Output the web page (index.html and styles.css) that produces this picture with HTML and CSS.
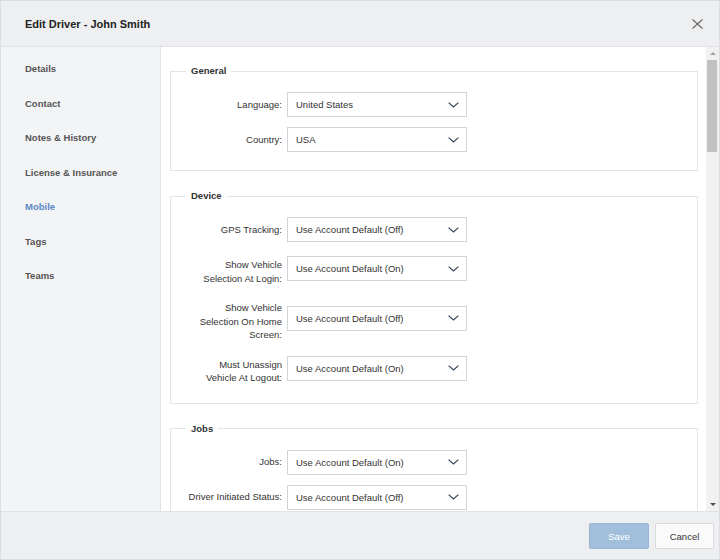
FILE: index.html
```html
<!DOCTYPE html>
<html lang="en">
<head>
    <meta charset="UTF-8">
    <meta name="viewport" content="width=device-width, initial-scale=1.0">
    <title>Edit Driver - John Smith</title>
    <link rel="stylesheet" href="styles.css">
</head>
<body>

    <div class="dialog">
        <header class="dialog-header">
            <h1>Edit Driver - John Smith</h1>
            <button class="close" type="button" aria-label="Close">
                <svg width="11" height="10" viewBox="0 0 11 10"><path d="M0.5 0.5l10 9M10.5 0.5l-10 9" stroke="#666" stroke-width="1.1" fill="none"/></svg>
            </button>
        </header>

        <div class="dialog-body">
            <nav class="side-nav">
                <a href="#">Details</a>
                <a href="#">Contact</a>
                <a href="#">Notes &amp; History</a>
                <a href="#">License &amp; Insurance</a>
                <a href="#" class="active">Mobile</a>
                <a href="#">Tags</a>
                <a href="#">Teams</a>
            </nav>

            <div class="content">
                <fieldset>
                    <legend>General</legend>
                    <div class="field">
                        <label>Language:</label>
                        <div class="select"><select><option>United States</option></select><svg width="11" height="6" viewBox="0 0 11 6"><path d="M0.6 0.6l4.9 4.4 4.9-4.4" stroke="#34445a" stroke-width="1.2" fill="none"/></svg></div>
                    </div>
                    <div class="field">
                        <label>Country:</label>
                        <div class="select"><select><option>USA</option></select><svg width="11" height="6" viewBox="0 0 11 6"><path d="M0.6 0.6l4.9 4.4 4.9-4.4" stroke="#34445a" stroke-width="1.2" fill="none"/></svg></div>
                    </div>
                </fieldset>

                <fieldset>
                    <legend>Device</legend>
                    <div class="field">
                        <label>GPS Tracking:</label>
                        <div class="select"><select><option>Use Account Default (Off)</option></select><svg width="11" height="6" viewBox="0 0 11 6"><path d="M0.6 0.6l4.9 4.4 4.9-4.4" stroke="#34445a" stroke-width="1.2" fill="none"/></svg></div>
                    </div>
                    <div class="field field--wrap">
                        <label>Show Vehicle Selection At Login:</label>
                        <div class="select"><select><option>Use Account Default (On)</option></select><svg width="11" height="6" viewBox="0 0 11 6"><path d="M0.6 0.6l4.9 4.4 4.9-4.4" stroke="#34445a" stroke-width="1.2" fill="none"/></svg></div>
                    </div>
                    <div class="field field--wrap">
                        <label>Show Vehicle Selection On Home Screen:</label>
                        <div class="select"><select><option>Use Account Default (Off)</option></select><svg width="11" height="6" viewBox="0 0 11 6"><path d="M0.6 0.6l4.9 4.4 4.9-4.4" stroke="#34445a" stroke-width="1.2" fill="none"/></svg></div>
                    </div>
                    <div class="field field--wrap">
                        <label>Must Unassign Vehicle At Logout:</label>
                        <div class="select"><select><option>Use Account Default (On)</option></select><svg width="11" height="6" viewBox="0 0 11 6"><path d="M0.6 0.6l4.9 4.4 4.9-4.4" stroke="#34445a" stroke-width="1.2" fill="none"/></svg></div>
                    </div>
                </fieldset>

                <fieldset>
                    <legend>Jobs</legend>
                    <div class="field">
                        <label>Jobs:</label>
                        <div class="select"><select><option>Use Account Default (On)</option></select><svg width="11" height="6" viewBox="0 0 11 6"><path d="M0.6 0.6l4.9 4.4 4.9-4.4" stroke="#34445a" stroke-width="1.2" fill="none"/></svg></div>
                    </div>
                    <div class="field">
                        <label>Driver Initiated Status:</label>
                        <div class="select"><select><option>Use Account Default (Off)</option></select><svg width="11" height="6" viewBox="0 0 11 6"><path d="M0.6 0.6l4.9 4.4 4.9-4.4" stroke="#34445a" stroke-width="1.2" fill="none"/></svg></div>
                    </div>
                </fieldset>
            </div>

            <div class="scrollbar" aria-hidden="true">
                <span class="scroll-btn scroll-up"></span>
                <div class="scroll-track"><span class="scroll-thumb"></span></div>
                <span class="scroll-btn scroll-down"></span>
            </div>
        </div>

        <footer class="dialog-footer">
            <button type="button" class="btn btn-save" disabled>Save</button>
            <button type="button" class="btn btn-cancel">Cancel</button>
        </footer>
    </div>

</body>
</html>
```

FILE: styles.css
```css
* {
    box-sizing: border-box;
}

html, body {
    margin: 0;
    padding: 0;
}

body {
    font-family: "Liberation Sans", Arial, sans-serif;
    font-size: 9.5px;
    color: #333;
    background-color: #fff;
}

.dialog {
    height: 560px;
    display: flex;
    flex-direction: column;
    border: 1px solid #dcdde0;
}

/* Cabeçalho */
.dialog-header {
    flex: 0 0 46px;
    display: flex;
    align-items: center;
    justify-content: space-between;
    padding: 0 16px 0 24px;
    background-color: #eeeff1;
    border-bottom: 1px solid #e1e2e5;
}

.dialog-header h1 {
    margin: 0;
    font-size: 11px;
    font-weight: bold;
    color: #222;
}

.close {
    display: flex;
    padding: 0;
    border: none;
    background: none;
    cursor: pointer;
}

.dialog-body {
    flex: 1;
    display: flex;
    min-height: 0;
}

/* Menu lateral */
.side-nav {
    flex: 0 0 160px;
    padding-top: 5px;
    background-color: #f3f4f6;
    border-right: 1px solid #e1e2e5;
}

.side-nav a {
    display: block;
    padding: 0 24px;
    line-height: 34.5px;
    font-weight: bold;
    color: #555;
    text-decoration: none;
}

.side-nav a.active {
    color: #5b88c4;
}

/* Conteúdo */
.content {
    flex: 1;
    min-width: 0;
    overflow: hidden;
    padding: 17px 8px 0 9px;
}

fieldset {
    min-width: 0;
    margin: 0 0 18px;
    padding: 14px 0 18px;
    border: 1px solid #e3e4e6;
}

legend {
    margin-left: 15px;
    padding: 0 5px;
    line-height: 14px;
    font-weight: bold;
    color: #333;
}

.field {
    display: flex;
    align-items: center;
    margin-bottom: 10px;
}

.field:last-child {
    margin-bottom: 0;
}

.field label {
    flex: 0 0 96px;
    margin: 0 5px 0 15px;
    text-align: right;
    line-height: 13.5px;
    color: #333;
}

.field--wrap label {
    padding-top: 6px;
}

.select {
    position: relative;
    width: 180px;
}

.select select {
    width: 100%;
    height: 25px;
    padding: 0 24px 0 8px;
    -webkit-appearance: none;
    appearance: none;
    border: 1px solid #d3d4d7;
    border-radius: 0;
    background-color: #fff;
    font: inherit;
    color: #333;
}

.select svg {
    position: absolute;
    right: 8px;
    top: 50%;
    margin-top: -3px;
    pointer-events: none;
}

/* Barra de rolagem */
.scrollbar {
    flex: 0 0 13px;
    display: flex;
    flex-direction: column;
    background-color: #f1f1f1;
}

.scroll-btn {
    flex: 0 0 13px;
    display: flex;
    align-items: center;
    justify-content: center;
}

.scroll-btn::before {
    content: "";
    border-left: 3px solid transparent;
    border-right: 3px solid transparent;
}

.scroll-up::before {
    border-bottom: 3px solid #a3a3a3;
}

.scroll-down::before {
    border-top: 3px solid #505050;
}

.scroll-track {
    flex: 1;
    padding: 0 2px 0 1px;
}

.scroll-thumb {
    display: block;
    height: 92px;
    background-color: #c1c1c1;
}

/* Rodapé */
.dialog-footer {
    flex: 0 0 48px;
    display: flex;
    align-items: center;
    justify-content: flex-end;
    gap: 6px;
    padding: 1px 5px 0 0;
    background-color: #eeeff1;
    border-top: 1px solid #e1e2e5;
}

.btn {
    height: 26px;
    padding: 0;
    border: 1px solid #d9dadd;
    border-radius: 2px;
    background-color: #fafafa;
    font: inherit;
    color: #333;
    cursor: pointer;
}

.btn-save {
    width: 60px;
    background-color: #a1bedb;
    border-color: #98b5d4;
    color: #fff;
    cursor: default;
}

.btn-cancel {
    width: 59px;
}
```
